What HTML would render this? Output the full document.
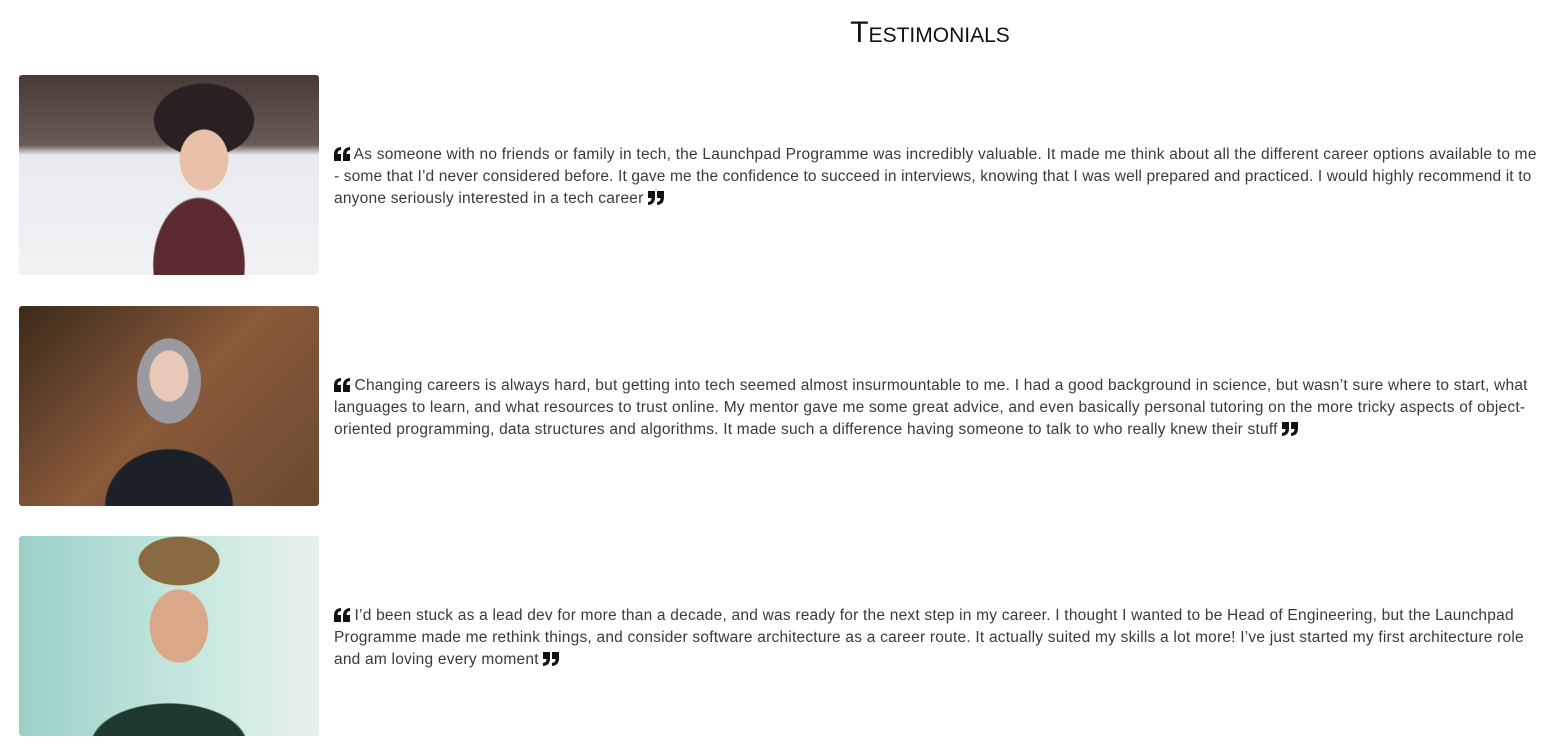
<!DOCTYPE html>
<html><head><style>
body{margin:0;background:#fff;font-family:"Liberation Sans",sans-serif;width:1541px;height:752px;overflow:hidden;position:relative}
h1{position:absolute;top:16px;left:0;width:1860px;text-align:center;margin:0;font-weight:normal;font-variant:small-caps;font-size:30px;color:#111;letter-spacing:0}
.row{position:absolute;left:19px;width:1522px;height:200px;display:flex;align-items:center}
.img{width:300px;height:200px;border-radius:3px;flex:none;margin-right:15px}
p{margin:0;font-size:15.5px;line-height:22px;color:#3a3a3a;padding-right:0;padding-top:4px;letter-spacing:0.22px;white-space:nowrap}
svg{vertical-align:-2px}
</style></head><body>
<h1>Testimonials</h1>
<div class="row" style="top:75px">
<div class="img" style="background:radial-gradient(ellipse 40px 50px at 185px 85px,#e8c0a8 60%,transparent 62%),radial-gradient(ellipse 55px 40px at 185px 45px,#2a2022 90%,transparent 92%),radial-gradient(ellipse 75px 110px at 180px 190px,#5a2a2e 60%,transparent 62%),linear-gradient(#4a3a36 0,#6a5a56 70px,#e8eaee 80px,#f2f2f4 200px)"></div>
<p><svg width="16" height="14" viewBox="0 0 16 14"><path d="M0 14V8C0 3 2 0.5 7 0V3C4 3.5 3.5 5 3.5 7H7V14ZM9 14V8C9 3 11 0.5 16 0V3C13 3.5 12.5 5 12.5 7H16V14Z" fill="#111"/></svg> As someone with no friends or family in tech, the Launchpad Programme was incredibly valuable. It made me think about all the different career options available to me<br><span style="letter-spacing:0.14px">- some that I’d never considered before. It gave me the confidence to succeed in interviews, knowing that I was well prepared and practiced. I would highly recommend it to</span><br>anyone seriously interested in a tech career <svg width="16" height="14" viewBox="0 0 16 14"><path d="M16 0V6C16 11 14 13.5 9 14V11C12 10.5 12.5 9 12.5 7H9V0ZM7 0V6C7 11 5 13.5 0 14V11C3 10.5 3.5 9 3.5 7H0V0Z" fill="#111"/></svg></p>
</div>
<div class="row" style="top:306px">
<div class="img" style="background:radial-gradient(ellipse 32px 42px at 150px 70px,#e8c8b8 60%,transparent 62%),radial-gradient(ellipse 45px 60px at 150px 75px,#9a9aa0 70%,transparent 72%),radial-gradient(ellipse 90px 80px at 150px 200px,#1c2028 70%,transparent 72%),linear-gradient(135deg,#3a2a1a,#8a5a3a 50%,#6a4a30)"></div>
<p><svg width="16" height="14" viewBox="0 0 16 14"><path d="M0 14V8C0 3 2 0.5 7 0V3C4 3.5 3.5 5 3.5 7H7V14ZM9 14V8C9 3 11 0.5 16 0V3C13 3.5 12.5 5 12.5 7H16V14Z" fill="#111"/></svg> Changing careers is always hard, but getting into tech seemed almost insurmountable to me. I had a good background in science, but wasn’t sure where to start, what<br>languages to learn, and what resources to trust online. My mentor gave me some great advice, and even basically personal tutoring on the more tricky aspects of object-<br>oriented programming, data structures and algorithms. It made such a difference having someone to talk to who really knew their stuff <svg width="16" height="14" viewBox="0 0 16 14"><path d="M16 0V6C16 11 14 13.5 9 14V11C12 10.5 12.5 9 12.5 7H9V0ZM7 0V6C7 11 5 13.5 0 14V11C3 10.5 3.5 9 3.5 7H0V0Z" fill="#111"/></svg></p>
</div>
<div class="row" style="top:536px">
<div class="img" style="background:radial-gradient(ellipse 48px 60px at 160px 90px,#d8a888 60%,transparent 62%),radial-gradient(ellipse 50px 30px at 160px 25px,#8a6a40 80%,transparent 82%),radial-gradient(ellipse 110px 60px at 150px 210px,#1e3a30 70%,transparent 72%),linear-gradient(90deg,#9ad0c8,#c8e8e0 60%,#e8f0ee)"></div>
<p><svg width="16" height="14" viewBox="0 0 16 14"><path d="M0 14V8C0 3 2 0.5 7 0V3C4 3.5 3.5 5 3.5 7H7V14ZM9 14V8C9 3 11 0.5 16 0V3C13 3.5 12.5 5 12.5 7H16V14Z" fill="#111"/></svg> I’d been stuck as a lead dev for more than a decade, and was ready for the next step in my career. I thought I wanted to be Head of Engineering, but the Launchpad<br>Programme made me rethink things, and consider software architecture as a career route. It actually suited my skills a lot more! I’ve just started my first architecture role<br>and am loving every moment <svg width="16" height="14" viewBox="0 0 16 14"><path d="M16 0V6C16 11 14 13.5 9 14V11C12 10.5 12.5 9 12.5 7H9V0ZM7 0V6C7 11 5 13.5 0 14V11C3 10.5 3.5 9 3.5 7H0V0Z" fill="#111"/></svg></p>
</div>
</body></html>
